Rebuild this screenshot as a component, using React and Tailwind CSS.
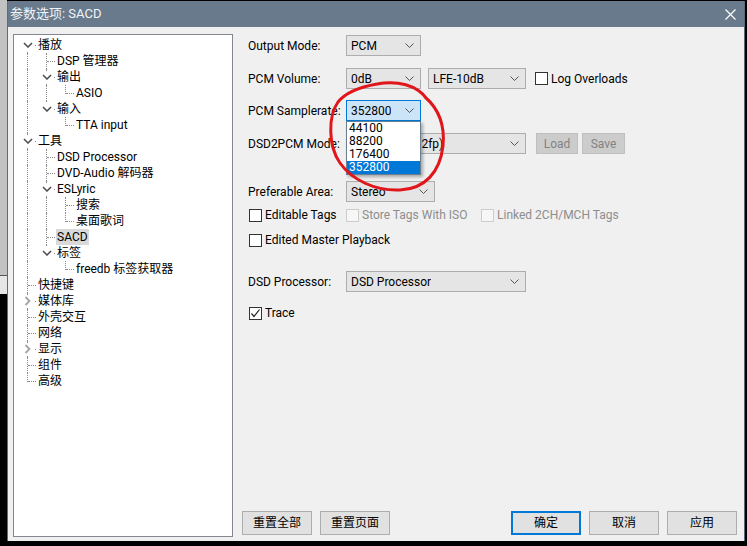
import React from "react";

const treeItems = [
  { l: 0, t: "播放", open: true },
  { l: 1, t: "DSP 管理器" },
  { l: 1, t: "输出", open: true },
  { l: 2, t: "ASIO" },
  { l: 1, t: "输入", open: true },
  { l: 2, t: "TTA input" },
  { l: 0, t: "工具", open: true },
  { l: 1, t: "DSD Processor" },
  { l: 1, t: "DVD-Audio 解码器" },
  { l: 1, t: "ESLyric", open: true },
  { l: 2, t: "搜索" },
  { l: 2, t: "桌面歌词" },
  { l: 1, t: "SACD", sel: true },
  { l: 1, t: "标签", open: true },
  { l: 2, t: "freedb 标签获取器" },
  { l: 0, t: "快捷键" },
  { l: 0, t: "媒体库", closed: true },
  { l: 0, t: "外壳交互" },
  { l: 0, t: "网络" },
  { l: 0, t: "显示", closed: true },
  { l: 0, t: "组件" },
  { l: 0, t: "高级" },
];

// work out which dotted lines each row needs
const rows = treeItems.map((it, i) => {
  const hasSibling = (level) => {
    for (let j = i + 1; j < treeItems.length; j++) {
      if (treeItems[j].l < level) return false;
      if (treeItems[j].l === level) return true;
    }
    return false;
  };
  const cont = [];
  for (let k = 0; k < it.l; k++) cont.push(hasSibling(k));
  return { ...it, cont, next: hasSibling(it.l), first: i === 0 };
});

const Chevron = ({ down = true }) =>
  down ? (
    <svg width="10" height="6" viewBox="0 0 10 6">
      <polyline points="1,1 5,5 9,1" fill="none" stroke="#4a4a4a" strokeWidth="1.5" />
    </svg>
  ) : (
    <svg width="7" height="10" viewBox="0 0 7 10">
      <polyline points="1.5,1 5.5,5 1.5,9" fill="none" stroke="#a6a6a6" strokeWidth="1.8" />
    </svg>
  );

const TreeRow = ({ row }) => {
  const vClass = row.first
    ? "top-[8px] bottom-0"
    : row.next
    ? "top-0 bottom-0"
    : "top-0 h-[9px]";

  return (
    <div className="flex h-[16px]">
      {row.cont.map((c, k) => (
        <span key={k} className="relative w-[19px] shrink-0">
          {c && <span className="absolute left-[9px] top-0 h-full border-l border-dotted border-[#8a8a8a]" />}
        </span>
      ))}
      <span className="relative w-[19px] shrink-0">
        <span className={`absolute left-[9px] border-l border-dotted border-[#8a8a8a] ${vClass}`} />
        <span className="absolute left-[10px] right-[1px] top-[8px] border-t border-dotted border-[#8a8a8a]" />
        {(row.open || row.closed) && (
          <span className="absolute left-[3px] top-[2px] flex h-[12px] w-[13px] items-center justify-center bg-white">
            <Chevron down={!row.closed} />
          </span>
        )}
      </span>
      <span className={`px-[1px] leading-[16px] whitespace-nowrap ${row.sel ? "bg-[#d9d9d9]" : ""}`}>
        {row.t}
      </span>
    </div>
  );
};

const Arrow = () => (
  <svg width="9" height="5" viewBox="0 0 9 5">
    <polyline points="0.5,0.5 4.5,4.5 8.5,0.5" fill="none" stroke="#555555" strokeWidth="1" />
  </svg>
);

const Select = ({ value, width, focus }) => (
  <div
    className={`flex h-[21px] shrink-0 items-center justify-between border pl-[4px] pr-[6px] ${width} ${
      focus ? "border-[#0078d7] bg-[#cce4f7]" : "border-[#adadad] bg-[#e5e5e5]"
    }`}
  >
    <span className="whitespace-nowrap overflow-hidden">{value}</span>
    <Arrow />
  </div>
);

const Check = ({ checked, disabled, label }) => (
  <div className="flex items-center gap-[3px]">
    <span
      className={`flex h-[13px] w-[13px] shrink-0 items-center justify-center border ${
        disabled ? "border-[#cccccc] bg-[#f7f7f7]" : "border-[#333333] bg-white"
      }`}
    >
      {checked && (
        <svg width="11" height="11" viewBox="0 0 11 11">
          <polyline points="1.5,5.5 4,8.5 9.5,1.5" fill="none" stroke="#222222" strokeWidth="1.2" />
        </svg>
      )}
    </span>
    <span className={disabled ? "text-[#8d8d8d]" : "text-black"}>{label}</span>
  </div>
);

const Label = ({ children }) => <span className="w-[98px] shrink-0 whitespace-nowrap">{children}</span>;

const Btn = ({ children, primary }) => (
  <button
    className={`flex h-[24px] w-[70px] items-center justify-center bg-[#e1e1e1] ${
      primary ? "border-2 border-[#0078d7]" : "border border-[#adadad]"
    }`}
  >
    {children}
  </button>
);

export default function App() {
  const font = { fontFamily: "Roboto, 'Noto Sans CJK SC', sans-serif" };

  return (
    <div className="relative flex h-[546px] w-[747px] overflow-hidden bg-black text-[12px] text-black" style={font}>
      {/* what is left of the window behind */}
      <div className="flex w-[7px] shrink-0 flex-col">
        <div className="h-[275px] bg-[#c2c2c2]" />
        <div className="h-[1px] bg-[#555555]" />
        <div className="h-[18px] bg-[#e6e6e6]" />
        <div className="flex-1 bg-black" />
      </div>

      <div className="mt-[1px] flex h-[540px] w-[738px] shrink-0 flex-col border-x border-[#5b6b7c] bg-[#f0f0f0]">
        <div className="flex h-[26px] shrink-0 items-center justify-between bg-[#687a8c] pl-[2px] pr-[8px]">
          <span className="text-[13px] text-[#f2f4f6]">参数选项: SACD</span>
          <svg width="11" height="11" viewBox="0 0 11 11">
            <path d="M0.5 0.5 L10.5 10.5 M10.5 0.5 L0.5 10.5" stroke="#ffffff" strokeWidth="1.2" />
          </svg>
        </div>

        <div className="flex flex-1 pl-[5px] pt-[7px] pb-[4px]">
          <div className="h-[503px] w-[220px] shrink-0 border border-[#828790] bg-white pl-[4px] pt-[2px]">
            {rows.map((r, i) => (
              <TreeRow key={i} row={r} />
            ))}
          </div>

          <div className="flex flex-1 flex-col">
            <div className="flex flex-col pl-[15px]">
              <div className="mt-[1px] flex items-center">
                <Label>Output Mode:</Label>
                <Select value="PCM" width="w-[75px]" />
              </div>

              <div className="mt-[12px] flex items-center">
                <Label>PCM Volume:</Label>
                <Select value="0dB" width="w-[75px]" />
                <div className="ml-[7px]">
                  <Select value="LFE-10dB" width="w-[98px]" />
                </div>
                <div className="ml-[9px]">
                  <Check label="Log Overloads" />
                </div>
              </div>

              <div className="mt-[11px] flex items-center">
                <Label>PCM Samplerate:</Label>
                <div className="relative z-10">
                  <Select value="352800" width="w-[75px]" focus />
                  <div className="absolute left-0 top-[21px] w-[75px] border border-[#6b7f92] bg-white shadow-[2px_2px_3px_rgba(0,0,0,0.3)]">
                    {["44100", "88200", "176400", "352800"].map((v) => (
                      <div
                        key={v}
                        className={`h-[13px] pl-[2px] leading-[13px] ${v === "352800" ? "bg-[#0078d7] text-white" : ""}`}
                      >
                        {v}
                      </div>
                    ))}
                  </div>
                </div>
              </div>

              <div className="mt-[12px] flex items-center">
                <Label>DSD2PCM Mode:</Label>
                <Select value="Multistage (32fp)" width="w-[180px]" />
                <div className="ml-[10px] flex gap-[4px] text-[#838383]">
                  <span className="flex h-[21px] w-[42px] items-center justify-center border border-[#bfbfbf] bg-[#cccccc]">Load</span>
                  <span className="flex h-[21px] w-[43px] items-center justify-center border border-[#bfbfbf] bg-[#cccccc]">Save</span>
                </div>
              </div>

              <div className="mt-[27px] flex items-center">
                <Label>Preferable Area:</Label>
                <Select value="Stereo" width="w-[89px]" />
              </div>

              <div className="mt-[5px] flex h-[16px] items-center pl-[1px]">
                <div className="w-[97px]">
                  <Check label="Editable Tags" />
                </div>
                <div className="w-[135px]">
                  <Check label="Store Tags With ISO" disabled />
                </div>
                <Check label="Linked 2CH/MCH Tags" disabled />
              </div>

              <div className="mt-[9px] flex h-[16px] items-center pl-[1px]">
                <Check label="Edited Master Playback" />
              </div>

              <div className="mt-[23px] flex items-center">
                <Label>DSD Processor:</Label>
                <Select value="DSD Processor" width="w-[180px]" />
              </div>

              <div className="mt-[13px] flex h-[16px] items-center pl-[1px]">
                <Check label="Trace" checked />
              </div>
            </div>

            <div className="mt-auto mb-[2px] flex items-center pl-[9px] pr-[7px]">
              <div className="flex gap-[8px]">
                <Btn>重置全部</Btn>
                <Btn>重置页面</Btn>
              </div>
              <div className="ml-auto flex gap-[8px]">
                <Btn primary>确定</Btn>
                <Btn>取消</Btn>
                <Btn>应用</Btn>
              </div>
            </div>
          </div>
        </div>
      </div>

      {/* hand drawn red mark on the screenshot */}
      <svg className="pointer-events-none absolute left-0 top-0 z-20" width="747" height="546" viewBox="0 0 747 546">
        <path
          d="M427 99 C417 85 397 80 377 84 C360 87 346 92 338 102 C328 116 328 146 340 163 C352 180 375 191 400 190 C425 189 440 172 443 146 C445 126 440 110 425 97"
          fill="none"
          stroke="#e0161b"
          strokeWidth="3"
          strokeLinecap="round"
        />
      </svg>
    </div>
  );
}
